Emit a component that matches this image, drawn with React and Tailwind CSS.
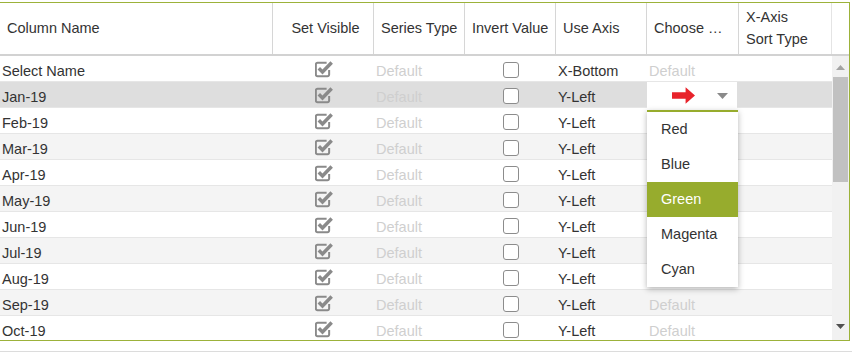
import React from 'react'

const months = ['Jan-19', 'Feb-19', 'Mar-19', 'Apr-19', 'May-19', 'Jun-19', 'Jul-19', 'Aug-19', 'Sep-19', 'Oct-19']

const rows = [
  { name: 'Select Name', axis: 'X-Bottom' },
  ...months.map(m => ({ name: m, axis: 'Y-Left' })),
]

const cols = 'grid grid-cols-[273px_101px_91px_91px_91px_92px_93px]'

function Checked() {
  return (
    <svg width="19" height="18" viewBox="0 0 18 17">
      <path d="M13.4 9.5 V13.8 a1.6 1.6 0 0 1 -1.6 1.6 H2.4 A1.6 1.6 0 0 1 0.8 13.8 V4.2 A1.6 1.6 0 0 1 2.4 2.6 H11" fill="none" stroke="#8a8a8a" strokeWidth="1.9" />
      <path d="M3.6 7.8 L7.1 11.3 L15.8 2.3" fill="none" stroke="#8a8a8a" strokeWidth="3.3" />
    </svg>
  )
}

function Unchecked() {
  return <div className="w-[16px] h-[16px] rounded-[3px] border-[1.5px] border-[#8c8c8c] bg-white" />
}

function Header() {
  const cell = 'flex items-center border-r border-[#d6d6d6] pl-[7px] pr-[2px] whitespace-nowrap'
  return (
    <div className="flex h-[53px] border-b-2 border-[#d2d2d2]">
      <div className={cols + ' h-full'}>
        <div className={cell}>Column Name</div>
        <div className={cell + ' justify-center pl-[2px]'}>Set Visible</div>
        <div className={cell}>Series Type</div>
        <div className={cell}>Invert Value</div>
        <div className={cell}>Use Axis</div>
        <div className={cell}>Choose …</div>
        <div className={cell + ' leading-[22px] pb-[1px] border-[#e4e4e4]'}>X-Axis<br />Sort Type</div>
      </div>
      <div className="flex-1" />
    </div>
  )
}

function Row({ row, i }) {
  const selected = i === 1
  const bg = selected ? 'bg-[#dedede]' : i % 2 === 1 ? 'bg-[#f4f4f4]' : 'bg-white'
  const txt = 'flex items-center pt-[5px] px-[2px]'
  return (
    <div className={cols + ' h-[26px] shrink-0 border-b border-[#e6e6e6] ' + bg}>
      <div className={txt}>{row.name}</div>
      <div className="flex items-center justify-center pl-[1px]"><Checked /></div>
      <div className={txt + ' text-[#cfcfcf]'}>Default</div>
      <div className="flex items-center justify-center pt-[1px]"><Unchecked /></div>
      <div className={txt}>{row.axis}</div>
      {selected ? (
        <div className="flex items-center bg-white mr-[2px] pl-[25px] gap-[22px] pt-[1px]">
          <svg width="23" height="17" viewBox="0 0 22 16">
            <polygon points="0,5 13,5 13,0 22,8 13,16 13,11 0,11" fill="#e8232b" />
          </svg>
          <svg width="11" height="6" viewBox="0 0 11 6" className="mt-[1px]">
            <polygon points="0,0 11,0 5.5,6" fill="#8a8a8a" />
          </svg>
        </div>
      ) : (
        <div className={txt + ' text-[#cfcfcf]'}>Default</div>
      )}
      <div />
    </div>
  )
}

function Scrollbar() {
  return (
    <div className="w-[17px] bg-[#f1f1f1] flex flex-col items-center">
      <svg width="9" height="5" viewBox="0 0 9 5" className="mt-[9px]">
        <polygon points="0,5 9,5 4.5,0" fill="#a3a3a3" />
      </svg>
      <div className="w-[15px] h-[105px] bg-[#c1c1c1] mt-[7px]" />
      <div className="flex-1" />
      <svg width="9" height="5" viewBox="0 0 9 5" className="mb-[11px]">
        <polygon points="0,0 9,0 4.5,5" fill="#505050" />
      </svg>
    </div>
  )
}

function Dropdown() {
  const items = ['Red', 'Blue', 'Green', 'Magenta', 'Cyan']
  return (
    <div className="absolute left-[647px] top-[110px] w-[91px] bg-white border-t-2 border-[#97ac2d] shadow-[0_2px_6px_rgba(0,0,0,0.3)]">
      {items.map(it => (
        <div
          key={it}
          className={'h-[35px] flex items-center pl-[14px] pt-[1px] ' + (it === 'Green' ? 'bg-[#97ac2d] text-white' : 'text-[#333]')}
        >
          {it}
        </div>
      ))}
    </div>
  )
}

export default function App() {
  return (
    <div className="w-[852px] h-[354px] bg-white overflow-hidden relative font-['Liberation_Sans',Arial,sans-serif] text-[14.5px] text-[#333]">
      <div className="pt-[2px]">
        <div className="w-[850px] h-[339px] border-t border-r border-b border-[#9cb23a] flex flex-col overflow-hidden">
          <Header />
          <div className="flex flex-1 overflow-hidden">
            <div className="w-[832px] flex flex-col overflow-hidden">
              {rows.map((r, i) => <Row key={r.name} row={r} i={i} />)}
            </div>
            <Scrollbar />
          </div>
        </div>
      </div>
      <div className="mt-[10px] border-t border-[#dcdcdc] h-[3px]" />
      <Dropdown />
    </div>
  )
}
